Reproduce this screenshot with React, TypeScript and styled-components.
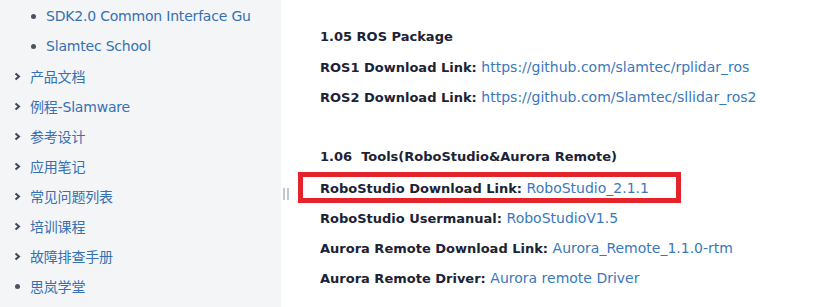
import { createGlobalStyle, styled } from 'styled-components';

const GlobalStyle = createGlobalStyle`
  html, body {
    margin: 0;
    padding: 0;
    background: #fff;
  }
  body {
    font-family: 'DejaVu Sans', 'Noto Sans CJK SC', sans-serif;
    font-size: 13px;
  }
`;

type Marker = 'bullet' | 'chevron';

interface NavItem {
  label: string;
  marker: Marker;
  nested?: boolean;
}

const navItems: NavItem[] = [
  { label: 'SDK2.0 Common Interface Gu', marker: 'bullet', nested: true },
  { label: 'Slamtec School', marker: 'bullet', nested: true },
  { label: '产品文档', marker: 'chevron' },
  { label: '例程-Slamware', marker: 'chevron' },
  { label: '参考设计', marker: 'chevron' },
  { label: '应用笔记', marker: 'chevron' },
  { label: '常见问题列表', marker: 'chevron' },
  { label: '培训课程', marker: 'chevron' },
  { label: '故障排查手册', marker: 'chevron' },
  { label: '思岚学堂', marker: 'bullet' },
];

const App = () => {
  return (
    <>
      <GlobalStyle />
      <Page>
        <Sidebar>
          {navItems.map((item) => (
            <NavRow key={item.label} $nested={item.nested}>
              <MarkerBox>
                {item.marker === 'bullet' ? (
                  <Dot />
                ) : (
                  <svg width="7" height="9" viewBox="0 0 7 9">
                    <path d="M1.5 1.5 L5 4.5 L1.5 7.5" fill="none" stroke="#3c4658" strokeWidth="2" />
                  </svg>
                )}
              </MarkerBox>
              <NavText>{item.label}</NavText>
            </NavRow>
          ))}
        </Sidebar>
        <Splitter>
          <Grip />
          <Grip />
        </Splitter>
        <Content>
          <Section>
            <Heading>1.05 ROS Package</Heading>
            <Line>
              ROS1 Download Link: <Link>https://github.com/slamtec/rplidar_ros</Link>
            </Line>
            <Line>
              ROS2 Download Link: <Link>https://github.com/Slamtec/sllidar_ros2</Link>
            </Line>
          </Section>
          <Section>
            <Heading>1.06&nbsp; Tools(RoboStudio&amp;Aurora Remote)</Heading>
            <Highlight>
              <Line>
                RoboStudio Download Link: <Link>RoboStudio_2.1.1</Link>
              </Line>
            </Highlight>
            <Line>
              RoboStudio Usermanual: <Link>RoboStudioV1.5</Link>
            </Line>
            <Line>
              Aurora Remote Download Link: <Link>Aurora_Remote_1.1.0-rtm</Link>
            </Line>
            <Line>
              Aurora Remote Driver: <Link>Aurora remote Driver</Link>
            </Line>
          </Section>
        </Content>
      </Page>
    </>
  );
};

const Page = styled.div`
  display: flex;
  width: 832px;
  height: 307px;
  overflow: hidden;
`;

const Sidebar = styled.nav`
  width: 281px;
  flex-shrink: 0;
  background: #f4f5f7;
  padding-top: 1px;
  box-sizing: border-box;
`;

const NavRow = styled.div<{ $nested?: boolean }>`
  display: flex;
  align-items: center;
  height: 30px;
  padding-left: ${(p) => (p.$nested ? '30px' : '14px')};
  color: #3670b2;
`;

const MarkerBox = styled.span`
  width: 16px;
  display: flex;
  align-items: center;
  flex-shrink: 0;
`;

const Dot = styled.span`
  width: 5px;
  height: 5px;
  border-radius: 50%;
  background: #4a5262;
  margin-left: 1px;
`;

const NavText = styled.span`
  font-size: 14px;
  white-space: nowrap;
  letter-spacing: -0.2px;
`;

const Splitter = styled.div`
  width: 18px;
  flex-shrink: 0;
  display: flex;
  gap: 2px;
  padding: 188px 0 0 2px;
  box-sizing: border-box;
`;

const Grip = styled.span`
  width: 2px;
  height: 12px;
  background: #c2c8d2;
`;

const Content = styled.main`
  flex: 1;
  padding-top: 22px;
  color: #1b2334;
  font-weight: bold;
  font-size: 13px;
`;

const Section = styled.div`
  margin-bottom: 30px;
`;

const Heading = styled.div`
  height: 30px;
  line-height: 30px;
  padding-left: 21px;
`;

const Line = styled.div`
  height: 30px;
  line-height: 30px;
  padding-left: 21px;
  white-space: nowrap;
`;

const Link = styled.span`
  color: #3a78bc;
  font-weight: normal;
  font-size: 14px;
`;

const Highlight = styled.div`
  width: 383px;
  height: 31px;
  box-sizing: border-box;
  margin-left: -1px;
  border: 5px solid #e5232a;
  display: flex;
  align-items: center;
  & > div {
    padding-left: 17px;
  }
`;

export default App;
